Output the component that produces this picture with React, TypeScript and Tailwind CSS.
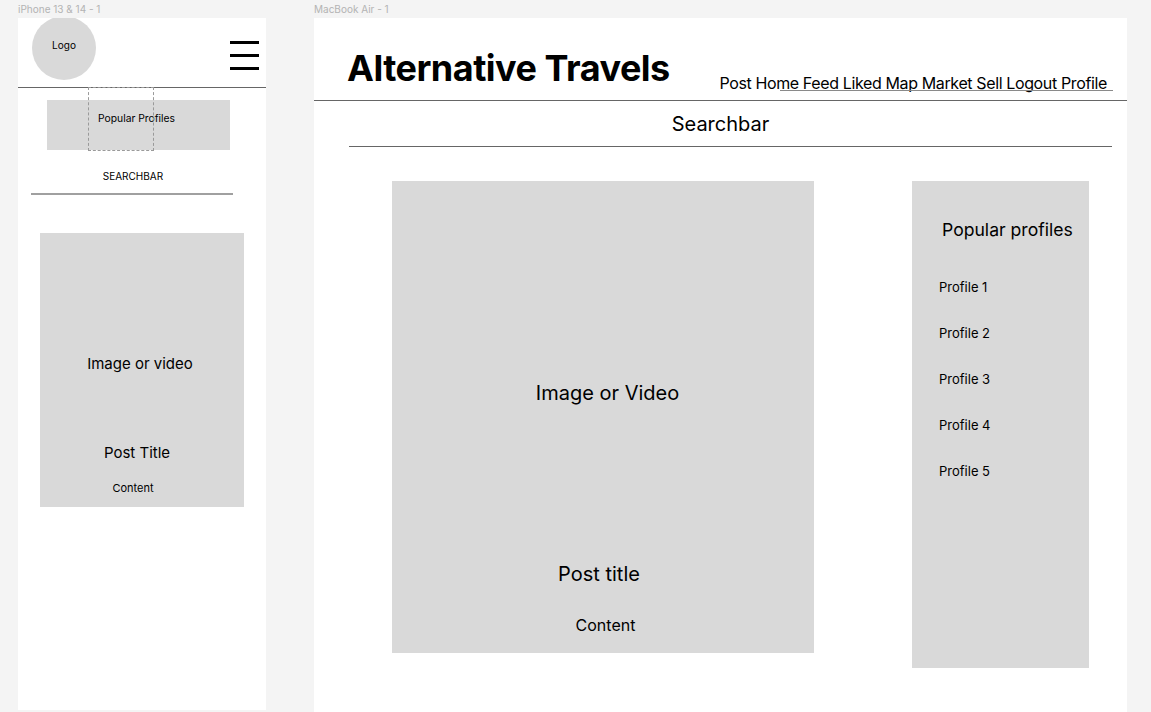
import React from "react";

const font = { fontFamily: "Inter, 'Noto Sans', sans-serif" };

const navItems = ["Post", "Home", "Feed", "Liked", "Map", "Market", "Sell", "Logout", "Profile"];
const profiles = ["Profile 1", "Profile 2", "Profile 3", "Profile 4", "Profile 5"];

const PhoneFrame = () => {
  return (
    <div className="flex flex-col ml-[18px] shrink-0">
      <div className="h-[18px] text-[10px] leading-[18px] text-[#b3b3b3]">iPhone 13 &amp; 14 - 1</div>
      <div className="w-[248px] h-[692px] bg-white overflow-hidden flex flex-col text-black">
        {/* header */}
        <div className="h-[70px] border-b border-[#666] flex items-start shrink-0">
          <div className="ml-[14px] mt-[-2px] w-[64px] h-[64px] rounded-full bg-[#d9d9d9] flex justify-center pt-[23px]">
            <span className="text-[10px] leading-[12px]">Logo</span>
          </div>
          <div className="ml-auto mr-[7px] mt-[23px] flex flex-col gap-[10px]">
            <div className="w-[29px] h-[3px] bg-black" />
            <div className="w-[29px] h-[3px] bg-black" />
            <div className="w-[29px] h-[3px] bg-black" />
          </div>
        </div>

        {/* popular profiles */}
        <div className="relative pt-[12px]">
          <div className="ml-[29px] w-[183px] h-[50px] bg-[#d9d9d9] flex justify-center pt-[12px]">
            <span className="text-[10.3px] leading-[13px] ml-[-4px]">Popular Profiles</span>
          </div>
          <div className="absolute left-[70px] top-[-1px] w-[66px] h-[64px] border border-dashed border-[#9a9a9a]" />
        </div>

        <div className="mt-[20px] text-center text-[10px] leading-[12px] ml-[-18px]">SEARCHBAR</div>
        <div className="mt-[11px] ml-[13px] w-[202px] h-[2px] bg-[#a0a0a0]" />

        {/* post card */}
        <div className="mt-[38px] ml-[22px] w-[204px] h-[274px] bg-[#d9d9d9] flex flex-col items-center">
          <div className="pt-[122px] text-[15px] leading-[18px] mr-[4px]">Image or video</div>
          <div className="mt-[71px] text-[15px] leading-[18px] mr-[10px]">Post Title</div>
          <div className="mt-[19px] text-[11px] leading-[14px] mr-[18px]">Content</div>
        </div>
      </div>
    </div>
  );
};

const DesktopFrame = () => {
  return (
    <div className="flex flex-col ml-[48px] shrink-0">
      <div className="h-[18px] text-[10px] leading-[18px] text-[#b3b3b3]">MacBook Air - 1</div>
      <div className="w-[813px] h-[694px] bg-white flex flex-col text-black">
        {/* header */}
        <div className="h-[83px] border-b border-[#666] flex items-start shrink-0">
          <h1 className="ml-[33px] pt-[28px] text-[36px] leading-[44px] font-bold tracking-[-0.5px]">
            Alternative Travels
          </h1>
          <div className="relative ml-auto mr-[20px] pt-[55px]">
            <nav className="flex gap-[4px] text-[16px] leading-[20px] tracking-[-0.35px]">
              {navItems.map((item) => (
                <span key={item}>{item}</span>
              ))}
            </nav>
            <div className="absolute left-[61px] right-[-6px] top-[72px] h-px bg-[#8a8a8a]" />
          </div>
        </div>

        {/* searchbar */}
        <div className="pt-[11px] text-center text-[20px] leading-[24px]">Searchbar</div>
        <div className="mt-[10px] ml-[35px] w-[763px] h-px bg-[#666]" />

        {/* content */}
        <div className="mt-[34px] flex items-start">
          <div className="ml-[78px] w-[422px] h-[472px] bg-[#d9d9d9] flex flex-col items-center">
            <div className="pt-[200px] text-[20px] leading-[24px] ml-[9px]">Image or Video</div>
            <div className="mt-[157px] text-[20px] leading-[24px] mr-[8px]">Post title</div>
            <div className="mt-[29px] text-[16px] leading-[20px] ml-[5px]">Content</div>
          </div>

          <aside className="ml-[98px] w-[177px] h-[487px] bg-[#d9d9d9] flex flex-col">
            <div className="ml-[30px] pt-[38px] text-[17.6px] leading-[22px]">Popular profiles</div>
            <div className="ml-[27px] mt-[38px] flex flex-col gap-[30px]">
              {profiles.map((p) => (
                <div key={p} className="text-[13px] leading-[16px]">
                  {p}
                </div>
              ))}
            </div>
          </aside>
        </div>
      </div>
    </div>
  );
};

export default function App() {
  return (
    <div className="w-[1151px] h-[712px] bg-[#f4f4f4] overflow-hidden flex items-start" style={font}>
      <PhoneFrame />
      <DesktopFrame />
    </div>
  );
}
